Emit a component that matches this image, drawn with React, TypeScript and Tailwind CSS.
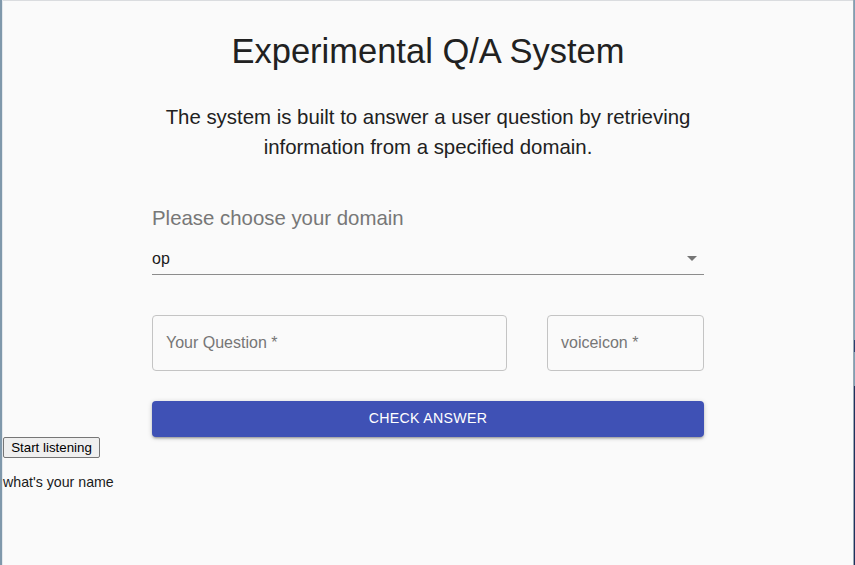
import React from 'react';

const font = "font-['Liberation_Sans',Arial,sans-serif]";

function OutlinedField({ label, className }: { label: string; className: string }) {
  return (
    <div
      className={`h-[56px] rounded-[4px] border border-[#c4c4c4] flex items-center px-[13px] ${className}`}
    >
      <span className="text-[16px] text-[#767676]">{label}</span>
    </div>
  );
}

export default function App() {
  return (
    <div className={`flex h-[565px] w-[855px] overflow-hidden ${font}`}>
      <div className="w-[3px] shrink-0 flex">
        <div className="w-[2px] bg-[#7f98ab]" />
        <div className="w-[1px] bg-[#e4e8ec]" />
      </div>
      <main className="flex-1 flex flex-col bg-[#fafafa] border-t border-[#dadcdf]">
        <div className="w-[552px] mx-auto flex flex-col pt-[30px]">
          <h1 className="text-[34.5px] leading-[40px] text-center text-[#212121]">
            Experimental Q/A System
          </h1>
          <p className="mt-[31px] text-[20.4px] leading-[30px] text-center text-[#212121]">
            The system is built to answer a user question by retrieving
            <br />
            information from a specified domain.
          </p>
          <label className="mt-[44px] text-[20.4px] leading-[24px] text-[#777777]">
            Please choose your domain
          </label>
          <div className="mt-[10px] flex items-center justify-between border-b border-[#8c8c8c] pt-[9px] pb-[6px]">
            <span className="text-[16px] leading-[19px] text-[#1a1a1a]">op</span>
            <svg width="10" height="5" viewBox="0 0 10 5" className="mr-[7px]">
              <path d="M0 0h10L5 5z" fill="#757575" />
            </svg>
          </div>
          <div className="mt-[40px] flex justify-between">
            <OutlinedField label="Your Question *" className="w-[355px]" />
            <OutlinedField label="voiceicon *" className="w-[157px]" />
          </div>
          <button className="mt-[30px] h-[36px] rounded-[4px] bg-[#3f51b5] text-white text-[14.2px] tracking-[0.3px] uppercase shadow-[0_1px_5px_rgba(0,0,0,0.2),0_2px_2px_rgba(0,0,0,0.14),0_3px_1px_-2px_rgba(0,0,0,0.12)]">
            Check Answer
          </button>
        </div>
        <button className="block h-[21px] w-[97px] border border-[#767676] rounded-[2px] bg-[#efefef] text-[13.33px] text-black leading-none">
          Start listening
        </button>
        <p className="mt-[14px] text-[14.2px] leading-[20px] text-[#1a1a1a]">what's your name</p>
      </main>
      <div className="w-[2px] shrink-0 flex">
        <div className="w-[1px] bg-[#9aa8b4]" />
        <div className="w-[1px] flex flex-col">
          <div className="h-[340px] bg-[#7f9fb4]" />
          <div className="h-[12px] bg-[#2a3f6e]" />
          <div className="h-[34px] bg-[#7f9fb4]" />
          <div className="flex-1 bg-[#1f2f5c]" />
        </div>
      </div>
    </div>
  );
}
